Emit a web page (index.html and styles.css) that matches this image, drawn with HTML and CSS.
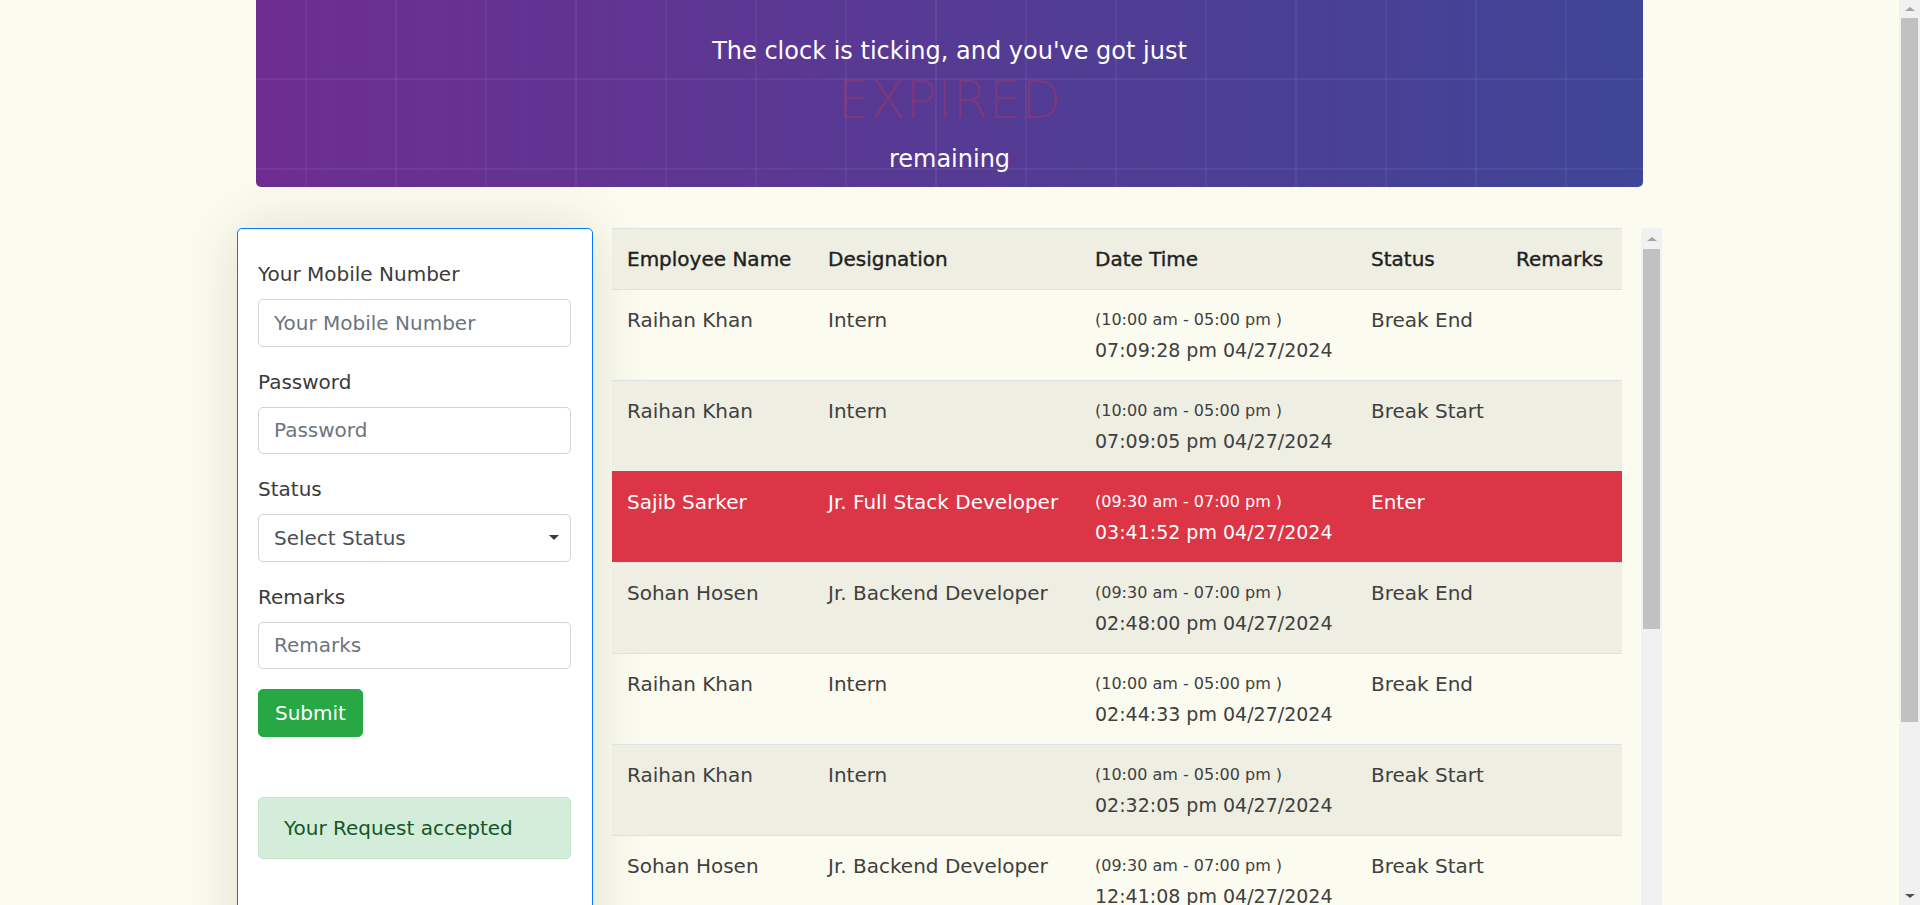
FILE: index.html
```html
<!DOCTYPE html>
<html lang="en">
<head>
<meta charset="utf-8">
<title>Attendance</title>
<link rel="stylesheet" href="styles.css">
</head>
<body>
<div class="container">
  <header class="banner">
    <p class="banner-line">The clock is ticking, and you've got just</p>
    <div class="countdown">EXPIRED</div>
    <p class="banner-line banner-line--low">remaining</p>
  </header>

  <div class="main-row">
    <aside class="form-card">
      <form class="entry-form">
        <div class="form-group">
          <label class="form-label">Your Mobile Number</label>
          <input class="form-control" type="text" placeholder="Your Mobile Number">
        </div>
        <div class="form-group">
          <label class="form-label">Password</label>
          <input class="form-control" type="password" placeholder="Password">
        </div>
        <div class="form-group">
          <label class="form-label">Status</label>
          <div class="select-box">
            <select class="form-control form-select">
              <option>Select Status</option>
              <option>Enter</option>
              <option>Break Start</option>
              <option>Break End</option>
              <option>Exit</option>
            </select>
            <svg class="select-caret" width="10" height="5" viewBox="0 0 10 5"><polygon points="0,0 10,0 5,5" fill="#343a40"/></svg>
          </div>
        </div>
        <div class="form-group">
          <label class="form-label">Remarks</label>
          <input class="form-control" type="text" placeholder="Remarks">
        </div>
        <button class="btn-submit" type="button">Submit</button>
      </form>
      <div class="alert-success">Your Request accepted</div>
    </aside>

    <section class="table-panel">
      <div class="table-viewport">
        <table class="log-table">
          <colgroup>
            <col class="c-name"><col class="c-desig"><col class="c-date"><col class="c-status"><col class="c-remarks">
          </colgroup>
          <thead>
            <tr><th>Employee Name</th><th>Designation</th><th>Date Time</th><th>Status</th><th>Remarks</th></tr>
          </thead>
          <tbody>
            <tr><td>Raihan Khan</td><td>Intern</td><td><span class="shift">(10:00 am - 05:00 pm )</span><span class="stamp">07:09:28 pm 04/27/2024</span></td><td>Break End</td><td></td></tr>
            <tr><td>Raihan Khan</td><td>Intern</td><td><span class="shift">(10:00 am - 05:00 pm )</span><span class="stamp">07:09:05 pm 04/27/2024</span></td><td>Break Start</td><td></td></tr>
            <tr class="late"><td>Sajib Sarker</td><td>Jr. Full Stack Developer</td><td><span class="shift">(09:30 am - 07:00 pm )</span><span class="stamp">03:41:52 pm 04/27/2024</span></td><td>Enter</td><td></td></tr>
            <tr><td>Sohan Hosen</td><td>Jr. Backend Developer</td><td><span class="shift">(09:30 am - 07:00 pm )</span><span class="stamp">02:48:00 pm 04/27/2024</span></td><td>Break End</td><td></td></tr>
            <tr><td>Raihan Khan</td><td>Intern</td><td><span class="shift">(10:00 am - 05:00 pm )</span><span class="stamp">02:44:33 pm 04/27/2024</span></td><td>Break End</td><td></td></tr>
            <tr><td>Raihan Khan</td><td>Intern</td><td><span class="shift">(10:00 am - 05:00 pm )</span><span class="stamp">02:32:05 pm 04/27/2024</span></td><td>Break Start</td><td></td></tr>
            <tr><td>Sohan Hosen</td><td>Jr. Backend Developer</td><td><span class="shift">(09:30 am - 07:00 pm )</span><span class="stamp">12:41:08 pm 04/27/2024</span></td><td>Break Start</td><td></td></tr>
          </tbody>
        </table>
      </div>
      <div class="vscroll vscroll--inner" aria-hidden="true">
        <div class="vscroll-btn vscroll-btn--up"></div>
        <div class="vscroll-thumb"></div>
      </div>
    </section>
  </div>
</div>

<div class="vscroll vscroll--page" aria-hidden="true">
  <div class="vscroll-btn vscroll-btn--up vscroll-btn--short"></div>
  <div class="vscroll-thumb vscroll-thumb--page"></div>
  <div class="vscroll-fill"></div>
  <div class="vscroll-btn vscroll-btn--down vscroll-btn--short"></div>
</div>
</body>
</html>
```
FILE: styles.css
```css
html,
body {
  overflow: hidden;
}

body {
  margin: 0;
  padding-right: 21px;
  background: #fbfbef;
  font-family: "DejaVu Sans", sans-serif;
  font-size: 20px;
  line-height: 1.5;
  color: #404040;
}

.container {
  width: 1425px;
  margin: 0 auto;
}

/* ---------- banner ---------- */
.banner {
  margin: 0 19px;
  height: 187px;
  box-sizing: border-box;
  padding-top: 33px;
  border-radius: 0 0 5px 5px;
  color: #fff;
  text-align: center;
  background-image:
    linear-gradient(to right, rgba(255, 255, 255, 0.05) 0 2px, transparent 2px),
    linear-gradient(to bottom, rgba(255, 255, 255, 0.05) 0 2px, transparent 2px),
    linear-gradient(to right, #6e2d91, #5a3893 40%, #3f4597);
  background-size: 90px 100%, 100% 90px, 100% 100%;
  background-position: 49px 0, 0 78px, 0 0;
  background-repeat: repeat-x, repeat-y, no-repeat;
}

.banner-line {
  margin: 0;
  font-size: 24px;
  line-height: 36px;
}

.banner-line--low {
  margin-top: 11px;
}

.countdown {
  margin-top: 1px;
  font-size: 52px;
  font-weight: 200;
  line-height: 60px;
  color: rgba(220, 53, 69, 0.28);
}

/* ---------- layout row ---------- */
.main-row {
  display: flex;
  margin-top: 41px;
  align-items: flex-start;
}

/* ---------- form card ---------- */
.form-card {
  flex: none;
  width: 356px;
  min-height: 1000px;
  box-sizing: border-box;
  padding: 30px 21px 0 20px;
  background: #fff;
  border: 1px solid #007bff;
  border-radius: 5px;
  box-shadow: 0 0 60px rgba(60, 60, 20, 0.14);
}

.entry-form {
  margin: 0;
}

.form-group {
  margin-bottom: 20px;
}

.form-label {
  display: block;
  margin-bottom: 10px;
  line-height: 30px;
  color: #3b3b3b;
}

.form-control {
  display: block;
  width: 100%;
  height: 47.5px;
  box-sizing: border-box;
  padding: 7px 15px;
  font-family: inherit;
  font-size: 20px;
  line-height: 30px;
  color: #495057;
  background: #fff;
  border: 1px solid #ced4da;
  border-radius: 5px;
  outline: none;
}

.form-control::placeholder {
  color: #6c757d;
}

.select-box {
  position: relative;
}

.form-select {
  appearance: none;
  -webkit-appearance: none;
  padding-right: 35px;
}

.select-caret {
  position: absolute;
  right: 12px;
  top: 21px;
}

.btn-submit {
  display: block;
  height: 47.5px;
  padding: 0 16px;
  font-family: inherit;
  font-size: 20px;
  line-height: 30px;
  color: #fff;
  background: #28a745;
  border: 1px solid #28a745;
  border-radius: 5px;
}

.alert-success {
  margin-top: 60px;
  padding: 15px 25px;
  line-height: 30px;
  color: #155724;
  background: #d4edda;
  border: 1px solid #c3e6cb;
  border-radius: 5px;
}

/* ---------- table ---------- */
.table-panel {
  flex: 1;
  display: flex;
  height: 720px;
}

.table-viewport {
  flex: 1;
  min-width: 0;
  padding: 0 19px;
  overflow: hidden;
}

.log-table {
  width: 100%;
  table-layout: fixed;
  border-collapse: collapse;
}

.c-name { width: 201px; }
.c-desig { width: 267px; }
.c-date { width: 276px; }
.c-status { width: 145px; }
.c-remarks { width: 121px; }

.log-table th {
  padding: 15px;
  text-align: left;
  font-weight: 400;
  line-height: 30px;
  color: #1f1f1f;
  -webkit-text-stroke: 0.4px #1f1f1f;
  background: #eeeee3;
  border-top: 1px solid #dee2e6;
  border-bottom: 1px solid #dee2e6;
  white-space: nowrap;
}

.log-table td {
  height: 60px;
  padding: 15px;
  vertical-align: top;
  line-height: 30px;
  border-top: 1px solid #dee2e6;
  white-space: nowrap;
}

.log-table tbody tr:nth-child(even) {
  background: #eeeee3;
}

.log-table tbody tr.late {
  background: #dc3545;
  color: #fff;
}

.log-table tr.late td {
  border-top-color: #dc3545;
}

.shift {
  display: block;
  font-size: 16px;
  line-height: 30px;
}

.stamp {
  display: block;
  font-size: 19px;
  line-height: 30px;
}

/* ---------- scrollbars ---------- */
.vscroll {
  flex: none;
  width: 21px;
  display: flex;
  flex-direction: column;
  background: #f1f1f1;
}

.vscroll--inner {
  height: 720px;
}

.vscroll--page {
  position: fixed;
  top: 0;
  right: 0;
  height: 100vh;
}

.vscroll-btn {
  flex: none;
  height: 21px;
  display: flex;
  align-items: center;
  justify-content: center;
}

.vscroll-btn--short {
  height: 18px;
}

.vscroll-btn--up::before {
  content: "";
  border-left: 5px solid transparent;
  border-right: 5px solid transparent;
  border-bottom: 4px solid #a3a3a3;
}

.vscroll-btn--down::before {
  content: "";
  border-left: 5px solid transparent;
  border-right: 5px solid transparent;
  border-top: 4px solid #505050;
}

.vscroll-thumb {
  flex: none;
  height: 380px;
  margin: 0 2px;
  background: #c1c1c1;
}

.vscroll-thumb--page {
  height: 704px;
}

.vscroll-fill {
  flex: 1;
}
```
